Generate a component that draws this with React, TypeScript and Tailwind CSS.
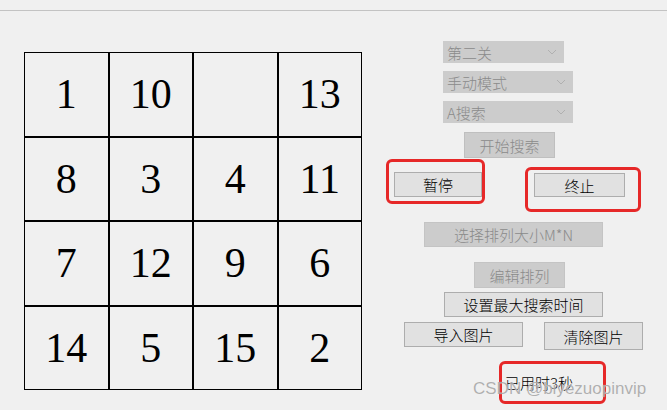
import React from "react";

const cjk = { fontFamily: '"Noto Sans CJK SC", "Liberation Sans", sans-serif' };

const tiles: (number | null)[] = [1, 10, null, 13, 8, 3, 4, 11, 7, 12, 9, 6, 14, 5, 15, 2];

function Chevron() {
  return (
    <svg width="10" height="6" viewBox="0 0 10 6" className="shrink-0">
      <path d="M1 1 L5 5 L9 1" fill="none" stroke="#b0b0b0" strokeWidth="1" />
    </svg>
  );
}

function Combo({ label, w, ml }: { label: string; w: string; ml: string }) {
  return (
    <div
      className={`flex items-center justify-between h-[22px] bg-[#cccccc] pl-[4px] pr-[7px] text-[15px] leading-none font-light text-[#8a8a8a] ${w} ${ml}`}
      style={cjk}
    >
      <span>{label}</span>
      <Chevron />
    </div>
  );
}

export default function App() {
  return (
    <div className="relative w-[667px] h-[410px] overflow-hidden bg-[#f0f0f0] font-light" style={cjk}>
      <div className="h-[10px]" />
      <div className="border-t border-[#c3c3c3]" />
      <div className="flex items-start">
        {/* Puzzle grid */}
        <div className="ml-[24px] mt-[41px] grid grid-cols-4 w-[338px] h-[338px]">
          {tiles.map((t, i) => (
            <div
              key={i}
              className="border border-black flex items-center justify-center text-[42px] leading-none font-normal text-black"
              style={{ fontFamily: '"Liberation Serif", "DejaVu Serif", serif' }}
            >
              {t ?? ""}
            </div>
          ))}
        </div>

        {/* Right control panel */}
        <div className="ml-[18px] flex flex-col items-start">
          <div className="mt-[30px]">
            <Combo label="第二关" w="w-[121px]" ml="ml-[63px]" />
          </div>
          <div className="mt-[8px]">
            <Combo label="手动模式" w="w-[130px]" ml="ml-[63px]" />
          </div>
          <div className="mt-[8px]">
            <Combo label="A搜索" w="w-[130px]" ml="ml-[63px]" />
          </div>
          <div className="mt-[9px] ml-[84px] w-[91px] h-[26px] bg-[#cccccc] border border-[#bfbfbf] flex items-center justify-center text-[15px] leading-none text-[#8a8a8a]">
            开始搜索
          </div>

          <div className="mt-[1px] flex items-start">
            <div className="ml-[6px] w-[99px] h-[45px] border-[3px] border-[#e62828] rounded-[6px] pl-[5px] pt-[10px]">
              <div className="w-[88px] h-[25px] bg-[#e1e1e1] border border-[#adadad] flex items-center justify-center text-[15px] leading-none text-black">
                暂停
              </div>
            </div>
            <div className="ml-[40px] mt-[8px] w-[116px] h-[45px] border-[3px] border-[#e62828] rounded-[6px] pl-[6px] pt-[3px]">
              <div className="w-[91px] h-[24px] bg-[#e1e1e1] border border-[#adadad] flex items-center justify-center text-[15px] leading-none text-black">
                终止
              </div>
            </div>
          </div>

          <div className="mt-[10px] ml-[44px] w-[179px] h-[25px] bg-[#cccccc] border border-[#c4c4c4] flex items-center justify-center text-[15px] leading-none text-[#8a8a8a]">
            选择排列大小M*N
          </div>
          <div className="mt-[15px] ml-[94px] w-[91px] h-[26px] bg-[#cccccc] border border-[#c4c4c4] flex items-center justify-center text-[15px] leading-none text-[#8a8a8a]">
            编辑排列
          </div>
          <div className="mt-[4px] ml-[64px] w-[159px] h-[25px] bg-[#e1e1e1] border border-[#adadad] flex items-center justify-center text-[15px] leading-none text-black">
            设置最大搜索时间
          </div>
          <div className="mt-[5px] flex items-start">
            <div className="ml-[24px] w-[119px] h-[25px] bg-[#e1e1e1] border border-[#adadad] flex items-center justify-center text-[15px] leading-none text-black">
              导入图片
            </div>
            <div className="ml-[21px] w-[99px] h-[28px] bg-[#e1e1e1] border border-[#adadad] flex items-center justify-center text-[15px] leading-none text-black">
              清除图片
            </div>
          </div>
          <div className="mt-[11px] ml-[119px] w-[107px] h-[43px] border-[3px] border-[#e62828] rounded-[6px] pl-[3px] pt-[11px] text-[15px] leading-none text-black whitespace-nowrap">
            已用时3秒
          </div>
        </div>
      </div>

      {/* watermark */}
      <div
        className="absolute left-[473px] top-[380px] text-[17px] leading-none font-normal text-[#a9a9a9] opacity-90 whitespace-nowrap"
        style={{ fontFamily: '"Liberation Sans", Arial, sans-serif', textShadow: "0 0 1px #ffffff" }}
      >
        CSDN @biyezuopinvip
      </div>
    </div>
  );
}
